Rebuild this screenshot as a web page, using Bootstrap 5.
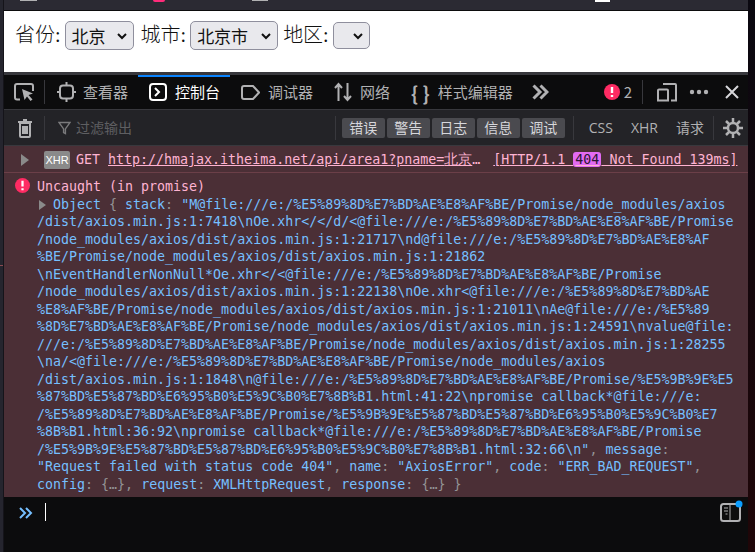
<!DOCTYPE html>
<html lang="zh"><head><meta charset="utf-8">
<link href="https://cdn.jsdelivr.net/npm/bootstrap@5.3.0/dist/css/bootstrap.min.css" rel="stylesheet">
<style>
html,body{height:100%;overflow:hidden}
body{background:linear-gradient(#0a0810,#1f0608);font-family:"Noto Sans CJK SC","Liberation Sans",sans-serif;color:#fbfbfe}
.frame{height:552px;width:748px;border-left:3px solid #25252e;display:flex;flex-direction:column;position:relative}
.inner{border-left:1px solid #15141a;height:552px;display:flex;flex-direction:column;background:#0c0c0d}
.tick{position:absolute;left:-3px;top:265px;width:3px;height:1px;background:#8a4a50}
.tstrip{height:10px;background:#2b2a33;position:relative}
.frag{position:absolute;top:0;height:1px;background:#b1b1b3}
.frag.pk{height:2px;background:#ff2b7a;border-radius:0 0 6px 6px}
.blk{height:1px;background:#0c0c0d}
.pagearea{height:61px;background:#fff;color:#111;font-size:20px;font-family:"Liberation Serif","Noto Sans CJK SC",serif;font-weight:300;padding:10px 0 0 11px;gap:4px}
.lbl{line-height:28px}
.selx{height:29px;background:#e9e9ed;border:1px solid #8f8f9d;border-radius:5px;color:#111;display:flex;align-items:center;justify-content:space-between;padding:1px 5px 0 6px;font-family:"Noto Sans CJK SC",sans-serif;font-size:17px;font-weight:400;margin-right:3px}
.selx svg{width:12px;height:8px}
.s1{width:69px}.s2{width:88px;margin-right:1px}.s3{width:37px;height:27px;margin-top:1px;justify-content:flex-end}
.sep3{height:3px;background:#38383d}
.tabs{height:35px;background:#0c0c0d;border-bottom:1px solid #38383d;font-size:15px;color:#b1b1b3}
.tabi{height:34px;display:flex;align-items:center;gap:8px;padding:0 10px 0 11px}
.tabi.on{color:#fff;border-top:2px solid #0a84ff;padding-bottom:2px}
.vsep{width:1px;height:24px;background:#38383d;flex:none}
.braces{font-size:19px;font-weight:700;line-height:1}
.tright{margin-left:auto;padding-right:9px}
.ftool{height:36px;background:#232327;border-bottom:1px solid #38383d;font-size:14px;color:#b1b1b3}
.filt{color:#5f5f62;margin-left:13px;gap:5px}
.fbtns{margin-left:auto}
.fbtn{height:20px;line-height:19px;background:#4a4a4f;border-radius:2px;width:43px;text-align:center;color:#d7d7db;font-size:14px}
.fbtn+.fbtn{margin-left:2px}
.sans2{font-family:"Open Sans",sans-serif;font-size:14px;margin-right:18px}
.msgs{background:#4b2f36;font-family:"DejaVu Sans Mono",monospace;font-size:13.3px;line-height:17.5px;color:#ffb3d2;height:351px}
.r1{height:27px;border-bottom:1px solid #6b3f48;padding:2px 0 0 17px;white-space:pre}
.xhr{background:#8a8a8a;color:#fff;font-family:"Liberation Sans",sans-serif;font-size:11px;border-radius:2px;line-height:18px;width:26px;text-align:center;margin:0 6px 0 15px}
.ulk{text-decoration:underline}
.cjk14{font-size:14px}
.p404{background:#e26bf2;color:#2b1533;border-radius:3px;padding:0 2px}
.blu{color:#75bfff}.gry{color:#939395}
.l{display:block;white-space:pre}
.body2{padding:5px 0 0 33px}
.errico{left:11px;top:5px}
.cons{flex:1;background:#0c0c0d;padding:6px 0 0 15px;gap:12px}
.caret{width:1px;height:18px;background:#fff}
.sideb{right:3px;top:3px}
</style></head><body>
<div class="frame"><span class="tick"></span><div class="inner">
<div class="tstrip"><span class="frag" style="left:16px;width:17px"></span><span class="frag pk" style="left:149px;width:12px"></span><span class="frag" style="left:248px;width:16px"></span><span class="frag" style="left:591px;width:15px;height:2px;background:#fff"></span></div><div class="blk"></div>
<div class="pagearea d-flex align-items-start">
<span class="lbl">省份:</span><span class="selx s1">北京<svg viewBox="0 0 12 8"><path d="M2 2l4 4 4-4" fill="none" stroke="#111" stroke-width="2"/></svg></span>
<span class="lbl">城市:</span><span class="selx s2">北京市<svg viewBox="0 0 12 8"><path d="M2 2l4 4 4-4" fill="none" stroke="#111" stroke-width="2"/></svg></span>
<span class="lbl">地区:</span><span class="selx s3"><svg viewBox="0 0 12 8"><path d="M2 2l4 4 4-4" fill="none" stroke="#111" stroke-width="2"/></svg></span>
</div>
<div class="sep3"></div>
<div class="tabs d-flex align-items-center">
<span class="tabi" style="padding:0 10px"><svg width="20" height="18" viewBox="0 0 20 18"><path d="M6 16.500H3a2 2 0 0 1-2-2V3a2 2 0 0 1 2-2h14a2 2 0 0 1 2 2v5" fill="none" stroke="#b1b1b3" stroke-width="2"/><path d="M8 6l11 4.500-4.500 1.500 4 4.500-2 1.500-3.500-4.500-2.500 3.500z" fill="#b1b1b3"/></svg></span><span class="vsep"></span>
<span class="tabi" style="padding-left:12px;gap:7px"><svg width="19" height="20" viewBox="0 0 19 20"><rect x="3" y="3.500" width="13" height="13" rx="3" fill="none" stroke="#b1b1b3" stroke-width="2"/><path d="M9.500 0v3.500M9.500 16.500V20M0 10h3M16 10h3" stroke="#b1b1b3" stroke-width="2"/></svg>查看器</span>
<span class="tabi on"><svg width="18" height="18" viewBox="0 0 18 18"><rect x="1" y="1" width="16" height="16" rx="3" fill="none" stroke="#fff" stroke-width="2"/><path d="M6 5l4 4-4 4" fill="none" stroke="#fff" stroke-width="2"/></svg>控制台</span>
<span class="tabi"><svg width="19" height="15" viewBox="0 0 19 15"><path d="M1 3a2 2 0 0 1 2-2h9l6 6.500-6 6.500H3a2 2 0 0 1-2-2z" fill="none" stroke="#b1b1b3" stroke-width="2"/></svg>调试器</span>
<span class="tabi"><svg width="18" height="20" viewBox="0 0 18 20"><path d="M4.500 19V2M1 6l3.500-4L8 6M13.500 1v17M10 14l3.500 4 3.500-4" fill="none" stroke="#b1b1b3" stroke-width="2"/></svg>网络</span>
<span class="tabi"><span class="braces">{ }</span>样式编辑器</span>
<span class="tabi" style="padding-left:9px"><svg width="17" height="16" viewBox="0 0 17 16"><path d="M1.500 1.500L8 8l-6.500 6.500M8.500 1.500L15 8l-6.500 6.500" fill="none" stroke="#b1b1b3" stroke-width="3"/></svg></span>
<span class="tright d-flex align-items-center">
<svg width="16" height="16" viewBox="0 0 16 16"><circle cx="8" cy="8" r="8" fill="#ff2b63"/><path d="M8 3v6M8 11v2" stroke="#fff" stroke-width="2.400"/></svg><span class="ms-1">2</span><span class="vsep" style="margin:0 14px 0 10px"></span>
<svg width="20" height="20" viewBox="0 0 20 20"><path d="M6 2h12a1 1 0 0 1 1 1v15.500h-5M2 7.500h8a1 1 0 0 1 1 1v10H1v-10a1 1 0 0 1 1-1z" fill="none" stroke="#b1b1b3" stroke-width="2"/></svg>
<svg style="margin:0 16px 0 12px" width="20" height="6" viewBox="0 0 20 6"><circle cx="3" cy="3" r="2.200" fill="#b1b1b3"/><circle cx="10" cy="3" r="2.200" fill="#b1b1b3"/><circle cx="17" cy="3" r="2.200" fill="#b1b1b3"/></svg>
<svg width="14" height="14" viewBox="0 0 14 14"><path d="M1 1l12 12M13 1L1 13" stroke="#d7d7db" stroke-width="2"/></svg>
</span>
</div>
<div class="ftool d-flex align-items-center">
<span style="padding:0 11px 0 13px" class="d-flex"><svg width="16" height="20" viewBox="0 0 16 20"><path d="M1 4h14M6 2h4M3 5h10v13a1 1 0 0 1-1 1H4a1 1 0 0 1-1-1zM6 8v8M8 8v8M10 8v8" fill="none" stroke="#b1b1b3" stroke-width="2"/></svg></span><span class="vsep"></span>
<span class="filt d-flex align-items-center"><svg width="13" height="14" viewBox="0 0 14 14"><path d="M1 1h12L8 8v5L6 12V8z" fill="none" stroke="#7a7a7c" stroke-width="1.500"/></svg>过滤输出</span>
<span class="fbtns d-flex align-items-center">
<span class="vsep" style="margin-right:6px"></span><span class="fbtn">错误</span><span class="fbtn">警告</span><span class="fbtn">日志</span><span class="fbtn">信息</span><span class="fbtn">调试</span><span class="vsep" style="margin:0 15px 0 8px"></span>
<span class="sans2">CSS</span><span class="sans2">XHR</span><span style="margin-right:9px">请求</span><span class="vsep"></span>
<svg style="margin:0 5px 0 9px" width="20" height="20" viewBox="0 0 20 20"><circle cx="10" cy="10" r="5" fill="none" stroke="#b1b1b3" stroke-width="2.500"/><path d="M10 0v4M10 16v4M0 10h4M16 10h4M3 3l3 3M14 14l3 3M17 3l-3 3M6 14l-3 3" stroke="#b1b1b3" stroke-width="2.500"/></svg>
</span>
</div>
<div class="msgs">
<div class="r1 d-flex align-items-center"><svg width="8" height="12" viewBox="0 0 8 12"><path d="M0 0l8 6-8 6z" fill="#8a8a8a"/></svg><span class="xhr">XHR</span><span>GET </span><span><span class="ulk">http://hmajax.itheima.net/api/area1?pname=<span class="cjk14">北京</span></span>…</span><span style="margin-left:13px" class="ulk">[HTTP/1.1 <span class="p404">404</span> Not Found 139ms]</span></div>
<div class="body2 position-relative">
<svg class="position-absolute errico" width="15" height="15" viewBox="0 0 16 16"><circle cx="8" cy="8" r="8" fill="#ff2b63"/><path d="M8 3v6M8 11v2" stroke="#fff" stroke-width="2.400"/></svg>
<span class="l">Uncaught (in promise)</span>
<span class="l blu"><svg style="margin:0 7px 0 2px" width="7" height="10" viewBox="0 0 7 10"><path d="M0 0l7 5-7 5z" fill="#8a8a8a"/></svg>Object <span class="gry">{</span> stack<span class="gry">:</span> "M@file:///e:/%E5%89%8D%E7%BD%AE%E8%AF%BE/Promise/node_modules/axios</span>
<span class="l blu">/dist/axios.min.js:1:7418\nOe.xhr&lt;/&lt;/d/&lt;@file:///e:/%E5%89%8D%E7%BD%AE%E8%AF%BE/Promise</span>
<span class="l blu">/node_modules/axios/dist/axios.min.js:1:21717\nd@file:///e:/%E5%89%8D%E7%BD%AE%E8%AF</span>
<span class="l blu">%BE/Promise/node_modules/axios/dist/axios.min.js:1:21862</span>
<span class="l blu">\nEventHandlerNonNull*Oe.xhr&lt;/&lt;@file:///e:/%E5%89%8D%E7%BD%AE%E8%AF%BE/Promise</span>
<span class="l blu">/node_modules/axios/dist/axios.min.js:1:22138\nOe.xhr&lt;@file:///e:/%E5%89%8D%E7%BD%AE</span>
<span class="l blu">%E8%AF%BE/Promise/node_modules/axios/dist/axios.min.js:1:21011\nAe@file:///e:/%E5%89</span>
<span class="l blu">%8D%E7%BD%AE%E8%AF%BE/Promise/node_modules/axios/dist/axios.min.js:1:24591\nvalue@file:</span>
<span class="l blu">///e:/%E5%89%8D%E7%BD%AE%E8%AF%BE/Promise/node_modules/axios/dist/axios.min.js:1:28255</span>
<span class="l blu">\na/&lt;@file:///e:/%E5%89%8D%E7%BD%AE%E8%AF%BE/Promise/node_modules/axios</span>
<span class="l blu">/dist/axios.min.js:1:1848\n@file:///e:/%E5%89%8D%E7%BD%AE%E8%AF%BE/Promise/%E5%9B%9E%E5</span>
<span class="l blu">%87%BD%E5%87%BD%E6%95%B0%E5%9C%B0%E7%8B%B1.html:41:22\npromise callback*@file:///e:</span>
<span class="l blu">/%E5%89%8D%E7%BD%AE%E8%AF%BE/Promise/%E5%9B%9E%E5%87%BD%E5%87%BD%E6%95%B0%E5%9C%B0%E7</span>
<span class="l blu">%8B%B1.html:36:92\npromise callback*@file:///e:/%E5%89%8D%E7%BD%AE%E8%AF%BE/Promise</span>
<span class="l blu">/%E5%9B%9E%E5%87%BD%E5%87%BD%E6%95%B0%E5%9C%B0%E7%8B%B1.html:32:66\n"<span class="gry">,</span> message<span class="gry">:</span></span>
<span class="l blu">"Request failed with status code 404"<span class="gry">,</span> name<span class="gry">:</span> "AxiosError"<span class="gry">,</span> code<span class="gry">:</span> "ERR_BAD_REQUEST"<span class="gry">,</span></span>
<span class="l blu">config<span class="gry">:</span> <span class="gry">{…}</span><span class="gry">,</span> request<span class="gry">:</span> XMLHttpRequest<span class="gry">,</span> response<span class="gry">:</span> <span class="gry">{…} }</span></span>
</div></div>
<div class="cons d-flex align-items-start position-relative">
<svg width="14" height="12" viewBox="0 0 14 12" class="mt-1"><path d="M1 1l5 5-5 5M7 1l5 5-5 5" fill="none" stroke="#75bfff" stroke-width="2"/></svg><span class="caret"></span>
<svg class="position-absolute sideb" width="26" height="24" viewBox="0 0 26 24"><rect x="2" y="4" width="19" height="17" rx="2.500" fill="none" stroke="#b1b1b3" stroke-width="2"/><path d="M11 4v17M5 8h4M5 11h4M6.500 14h2" stroke="#b1b1b3"/><circle cx="20" cy="4" r="3.500" fill="#0a9dff"/></svg>
</div>
</div></div>
<script src="https://cdn.jsdelivr.net/npm/bootstrap@5.3.0/dist/js/bootstrap.bundle.min.js"></script>
</body></html>
